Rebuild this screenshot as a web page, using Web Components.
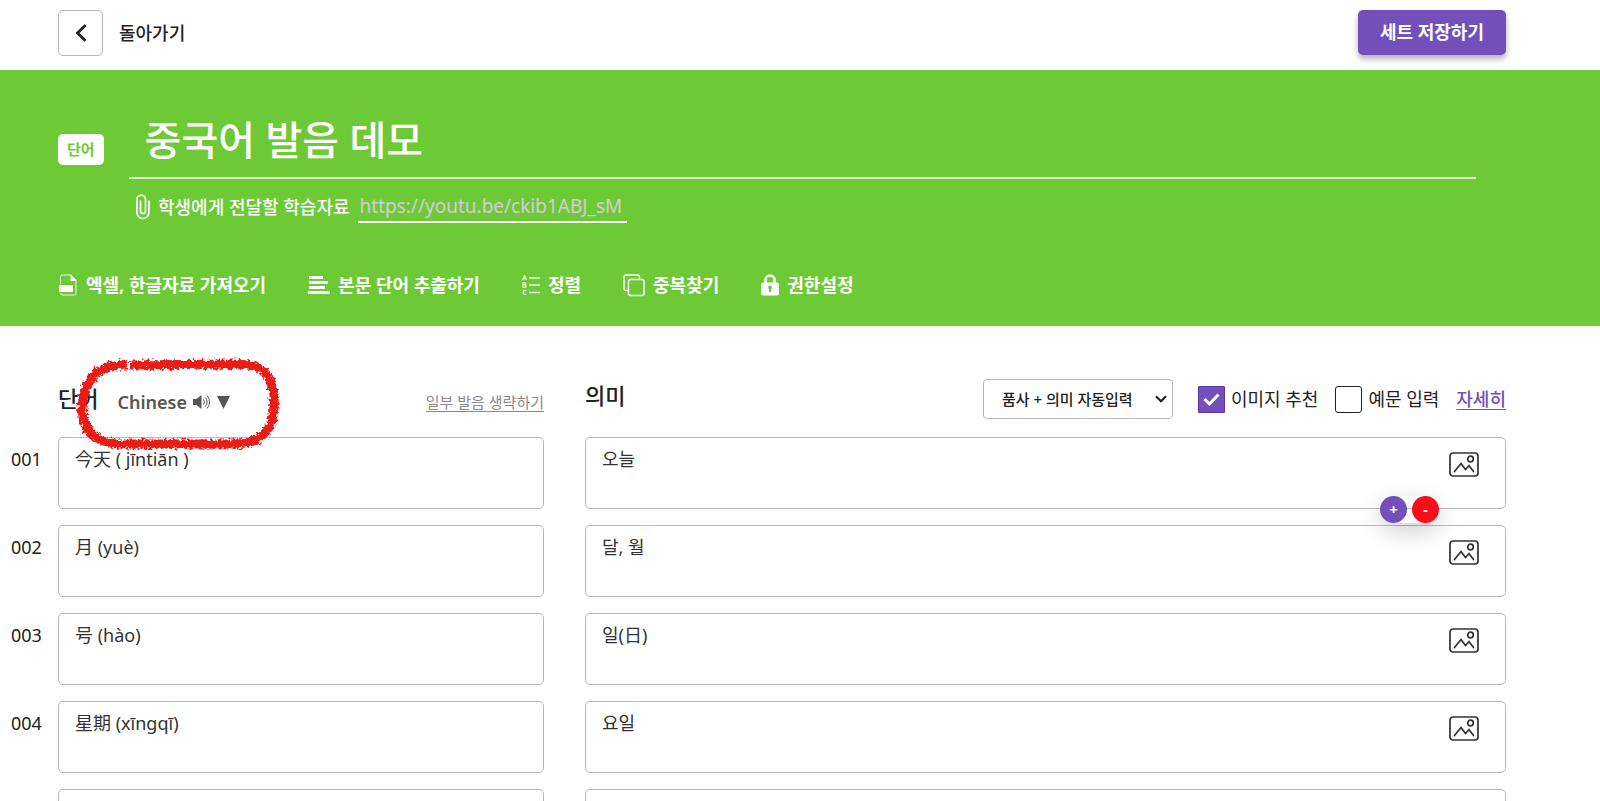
<!DOCTYPE html>
<html lang="ko">
<head>
<meta charset="utf-8">
<meta name="viewport" content="width=device-width, initial-scale=1">
<title>중국어 발음 데모</title>
<style>
    body {
        margin: 0;
        overflow: hidden;
        background: #fff;
        color: #222;
        font: 18px/26px "Noto Sans", "Noto Sans CJK KR", sans-serif;
        --purple: #734fbb;
        --green: #6dca36;
        --line: #b9b9b9;
        --left: 58px;
        --right: 94px;
    }
</style>
</head>
<body>
<set-header></set-header>
<set-hero>
    <tool-button icon="file">엑셀, 한글자료 가져오기</tool-button>
    <tool-button icon="lines">본문 단어 추출하기</tool-button>
    <tool-button icon="sort">정렬</tool-button>
    <tool-button icon="copy">중복찾기</tool-button>
    <tool-button icon="lock">권한설정</tool-button>
</set-hero>
<card-list>
    <list-head></list-head>
    <word-card no="001" word="今天 ( jīntiān )" meaning="오늘" active></word-card>
    <word-card no="002" word="月 (yuè)" meaning="달, 월"></word-card>
    <word-card no="003" word="号 (hào)" meaning="일(日)"></word-card>
    <word-card no="004" word="星期 (xīngqī)" meaning="요일"></word-card>
    <word-card></word-card>
</card-list>

<script>
const ICONS = {
    file: `<svg width="20" height="24" viewBox="0 0 20 24" fill="none" stroke="#fff">
        <path d="M2.5 11V4a2 2 0 0 1 2-2H13l5 5v13.500a1.500 1.500 0 0 1-1.500 1.500H4.500a2 2 0 0 1-2-2" stroke-opacity=".85"/>
        <path d="M12.500 2l6 6h-6z" fill="#fff" stroke="none"/>
        <rect x="1" y="12" width="14" height="7" rx="1" fill="#fff" stroke="none"/></svg>`,
    lines: `<svg width="22" height="18" viewBox="0 0 22 18" fill="#fff">
        <path d="M1 0h14v3H1zM1 5h19v3H1zM1 10h16v3H1zM0 15h22v3H0z"/></svg>`,
    sort: `<svg width="18" height="20" viewBox="0 0 18 20" fill="none" stroke="#fff" stroke-opacity=".85">
        <path d="M7 3h11M7 10h11M7 17.500h11" stroke-width="1.300"/>
        <path d="M.7 5L2.500 .7 4.300 5M1.300 3.500h2.500M1 7.700v4.600h1.800a1.200 1.200 0 0 0 0-2.400H1h1.600a1.100 1.100 0 0 0 0-2.200zM4.300 15.700a2 2 0 1 0 0 3.200" stroke-width="1.300"/></svg>`,
    copy: `<svg width="22" height="23" viewBox="0 0 22 23" fill="none" stroke="#fff" stroke-width="1.400">
        <path d="M5.500 16.500H3a2 2 0 0 1-2-2V3a2 2 0 0 1 2-2h11.500a2 2 0 0 1 2 2v2.500"/>
        <rect x="5.500" y="5.500" width="15.500" height="16" rx="2"/></svg>`,
    lock: `<svg width="18" height="22" viewBox="0 0 18 22">
        <path d="M4.500 10V6a4.500 4.500 0 0 1 9 0v4" fill="none" stroke="#fff" stroke-width="2.600"/>
        <rect x="0" y="8.500" width="18" height="13" rx="2" fill="#fff"/>
        <path d="M9 11.500a2 2 0 0 1 1 3.700V18H8v-2.800a2 2 0 0 1 1-3.700z" fill="#6dca36"/></svg>`,
    clip: `<svg width="14" height="26" viewBox="0 0 14 26" fill="none" stroke="#fff" stroke-width="1.700" stroke-linecap="round">
        <path d="M4.500 7v10a2.500 2.500 0 0 0 5 0V5.500a4.300 4.300 0 0 0-8.600 0V18.500a6 6 0 0 0 12 0V7"/></svg>`,
    back: `<svg width="12" height="18" viewBox="0 0 12 18" fill="none" stroke="#222" stroke-width="2.800">
        <path d="M10.500 1.200L2.500 9l8 7.800"/></svg>`,
    speaker: `<svg width="18" height="16" viewBox="0 0 18 16" fill="none" stroke="#555">
        <path d="M0 5h3.500L8.500 1v14L3.500 11H0z" fill="#555" stroke="none"/>
        <path d="M10.500 5.500a4 4 0 0 1 0 5M12.300 3.500a6.500 6.500 0 0 1 0 9M14 1.500a9.500 9.500 0 0 1 0 13"/></svg>`,
    down: `<svg width="13" height="13" viewBox="0 0 13 13"><path d="M0 0h13L6.500 13z" fill="#555"/></svg>`,
    chevron: `<svg width="12" height="8" viewBox="0 0 12 8" fill="none" stroke="#222" stroke-width="2.200">
        <path d="M1 1.200l5 5 5-5"/></svg>`,
    image: `<svg width="30" height="25" viewBox="0 0 30 25" fill="none" stroke="#333" stroke-width="1.700" stroke-linejoin="round" stroke-linecap="round">
        <rect x="1" y="1" width="28" height="23" rx="3"/>
        <circle cx="21.500" cy="7" r="2.800"/>
        <path d="M5.500 19.500l6.500-8 4.500 6 3.500-4 4.500 6"/></svg>`,
};

class SetHeader extends HTMLElement {
    constructor() {
        super();
        this.attachShadow({ mode: 'open' }).innerHTML = `
            <style>
                :host {
                    display: flex;
                    justify-content: space-between;
                    align-items: flex-start;
                    box-sizing: border-box;
                    min-height: 70px;
                    padding: 10px var(--right) 0 var(--left);
                }
                button { font: inherit; cursor: pointer; box-sizing: border-box; }
                .back {
                    display: flex;
                    align-items: center;
                    gap: 16px;
                    padding: 0;
                    border: 0;
                    background: none;
                    color: #222;
                    font-weight: 500;
                }
                .box {
                    display: grid;
                    place-items: center;
                    box-sizing: border-box;
                    width: 45px;
                    height: 46px;
                    border: 1px solid var(--line);
                    border-radius: 5px;
                }
                .save {
                    height: 45px;
                    padding: 0 22px 2px;
                    border: 0;
                    border-radius: 5px;
                    background: var(--purple);
                    box-shadow: 0 4px 6px rgba(0, 0, 0, .3);
                    color: #fff;
                    font-weight: 700;
                }
            </style>
            <button class="back"><span class="box">${ICONS.back}</span>돌아가기</button>
            <button class="save">세트 저장하기</button>
        `;
    }
}

class ToolButton extends HTMLElement {
    constructor() {
        super();
        this.attachShadow({ mode: 'open' }).innerHTML = `
            <style>
                :host { display: block; }
                button {
                    display: flex;
                    align-items: center;
                    gap: 8px;
                    padding: 0;
                    border: 0;
                    background: none;
                    color: #fff;
                    font: inherit;
                    font-weight: 700;
                    cursor: pointer;
                }
            </style>
            <button>${ICONS[this.getAttribute('icon')]}<slot></slot></button>
        `;
    }
}

class SetHero extends HTMLElement {
    constructor() {
        super();
        this.attachShadow({ mode: 'open' }).innerHTML = `
            <style>
                :host {
                    display: block;
                    padding: 40px var(--right) 28px var(--left);
                    background: var(--green);
                    color: #fff;
                }
                .title {
                    display: flex;
                    align-items: flex-end;
                    gap: 25px;
                    padding-right: 30px;
                }
                .badge {
                    margin-bottom: 14px;
                    padding: 2px 9px 3px;
                    border-radius: 5px;
                    background: #fff;
                    color: var(--green);
                    font-size: 15px;
                    font-weight: 700;
                }
                input {
                    box-sizing: border-box;
                    border: 0;
                    border-radius: 0;
                    outline: 0;
                    background: none;
                    color: #fff;
                    font: inherit;
                }
                .title input {
                    flex: 1;
                    min-width: 0;
                    height: 69px;
                    padding: 0 16px 12px;
                    border-bottom: 2px solid #e0f4d4;
                    font-size: 40px;
                    font-weight: 500;
                }
                .link {
                    display: flex;
                    align-items: center;
                    gap: 8px;
                    padding: 12px 0 0 78px;
                    font-weight: 500;
                }
                .link input {
                    width: 269px;
                    height: 32px;
                    padding: 0 2px;
                    border-bottom: 2px solid #fff;
                    font-size: 19px;
                    font-weight: 400;
                }
                .link input::placeholder { color: #d9cadb; opacity: 1; }
                nav {
                    display: flex;
                    flex-wrap: wrap;
                    gap: 42px;
                    padding-top: 49px;
                }
            </style>
            <div class="title">
                <span class="badge">단어</span>
                <input aria-label="세트 이름" value="중국어 발음 데모">
            </div>
            <div class="link">
                ${ICONS.clip}
                <label for="url">학생에게 전달할 학습자료</label>
                <input id="url" type="url" placeholder="https://youtu.be/ckib1ABJ_sM">
            </div>
            <nav><slot></slot></nav>
        `;
    }
}

class CardList extends HTMLElement {
    constructor() {
        super();
        this.attachShadow({ mode: 'open' }).innerHTML = `
            <style>
                :host {
                    display: flex;
                    flex-direction: column;
                    gap: 16px;
                    padding: 44px var(--right) 16px 0;
                }
            </style>
            <slot></slot>
        `;
    }
}

class CheckOption extends HTMLElement {
    constructor() {
        super();
        this.attachShadow({ mode: 'open' }).innerHTML = `
            <style>
                :host { display: block; }
                label { display: flex; align-items: center; gap: 6px; }
                input {
                    appearance: none;
                    box-sizing: border-box;
                    width: 27px;
                    height: 27px;
                    margin: 0;
                    border: 1px solid #222;
                    border-radius: 3px;
                }
                .mark { display: grid; }
                .mark > * { grid-area: 1 / 1; place-self: center; }
                svg { display: none; pointer-events: none; }
                input:checked { border-color: #5c35ad; border-radius: 1px; background: var(--purple); }
                input:checked + svg { display: block; }
            </style>
            <label>
                <span class="mark">
                    <input type="checkbox" ${this.hasAttribute('checked') ? 'checked' : ''}>
                    <svg width="17" height="13" viewBox="0 0 17 13" fill="none" stroke="#fff" stroke-width="3"><path d="M1.500 6l5 5 9-9.500"/></svg>
                </span>
                <slot></slot>
            </label>
        `;
    }
}

// Rough red pencil ring drawn around the language picker
class PencilRing extends HTMLElement {
    constructor() {
        super();
        this.attachShadow({ mode: 'open' }).innerHTML = `
            <style>
                :host {
                    position: absolute;
                    top: -32px;
                    left: -41px;
                    z-index: 1;
                    width: 206px;
                    height: 96px;
                    pointer-events: none;
                }
            </style>
            <svg width="206" height="96" viewBox="0 0 206 96">
                <filter id="rough" x="-5%" y="-10%" width="110%" height="120%">
                    <feTurbulence type="fractalNoise" baseFrequency=".35" numOctaves="2" seed="4"/>
                    <feDisplacementMap in="SourceGraphic" scale="8" xChannelSelector="R" yChannelSelector="G"/>
                </filter>
                <path filter="url(#rough)" fill="none" stroke="#ea1c14" stroke-width="9"
                    d="M51 8C32 8 21 12 14 23C8 33 6 42 6 52C7 72 18 85 42 87L160 87C182 86 195 76 197 58C200 40 198 28 191 18C184 8 172 7 154 7L54 8"/>
            </svg>
        `;
    }
}

class ListHead extends HTMLElement {
    constructor() {
        super();
        this.attachShadow({ mode: 'open' }).innerHTML = `
            <style>
                :host {
                    display: grid;
                    grid-template-columns: 486fr 921fr;
                    column-gap: 41px;
                    height: 51px;
                    padding-left: var(--left);
                }
                div { display: flex; align-items: center; }
                .term { height: 40px; margin-top: 12px; }
                h2 { margin: 0; font-size: 22px; line-height: 32px; font-weight: 500; }
                .term h2 { align-self: flex-start; }
                .lang { position: relative; margin: 0 auto 0 19px; }
                .lang button {
                    display: flex;
                    align-items: center;
                    gap: 6px;
                    padding: 0;
                    border: 0;
                    background: none;
                    color: #555;
                    font: inherit;
                    font-weight: 600;
                }
                .skip { color: #8a8a8a; font-size: 15px; text-underline-offset: 3px; }
                .meaning { align-items: flex-start; }
                .meaning h2 { margin: 9px auto 0 0; }
                .tools { gap: 17px; height: 40px; margin-top: 9px; }
                .select { display: grid; margin-right: 8px; align-items: center; }
                .select > * { grid-area: 1 / 1; }
                .select svg { justify-self: end; margin-right: 6px; pointer-events: none; }
                select {
                    appearance: none;
                    box-sizing: border-box;
                    width: 190px;
                    height: 40px;
                    padding: 0 18px;
                    border: 1px solid var(--line);
                    border-radius: 4px;
                    background: #fff;
                    color: #222;
                    font: inherit;
                    font-size: 15px;
                    font-weight: 500;
                }
                .more { color: var(--purple); font-weight: 500; text-underline-offset: 3px; }
            </style>
            <div class="term">
                <h2>단어</h2>
                <div class="lang">
                    <button>Chinese ${ICONS.speaker}${ICONS.down}</button>
                    <pencil-ring></pencil-ring>
                </div>
                <a class="skip" href="#">일부 발음 생략하기</a>
            </div>
            <div class="meaning">
                <h2>의미</h2>
                <div class="tools">
                    <div class="select">
                        <select aria-label="자동입력"><option>품사 + 의미 자동입력</option></select>
                        ${ICONS.chevron}
                    </div>
                    <check-option checked>이미지 추천</check-option>
                    <check-option>예문 입력</check-option>
                    <a class="more" href="#">자세히</a>
                </div>
            </div>
        `;
    }
}

class WordCard extends HTMLElement {
    constructor() {
        super();
        const no = this.getAttribute('no') || '';
        const word = this.getAttribute('word') || '';
        const meaning = this.getAttribute('meaning') || '';
        this.attachShadow({ mode: 'open' }).innerHTML = `
            <style>
                :host {
                    display: grid;
                    grid-template-columns: var(--left) 486fr 41px 921fr;
                    position: relative;
                }
                label { padding: 9px 0 0 11px; }
                .box {
                    display: flex;
                    box-sizing: border-box;
                    height: 72px;
                    border: 1px solid var(--line);
                    border-radius: 5px;
                }
                .meaning { grid-column: 4; padding-right: 26px; }
                textarea {
                    flex: 1;
                    min-width: 0;
                    box-sizing: border-box;
                    padding: 8px 16px 0;
                    border: 0;
                    outline: 0;
                    resize: none;
                    background: none;
                    color: #333;
                    font: inherit;
                }
                .pic {
                    align-self: flex-start;
                    margin-top: 14px;
                    padding: 0;
                    border: 0;
                    background: none;
                    line-height: 0;
                }
                .edit {
                    display: none;
                    position: absolute;
                    right: 67px;
                    bottom: -14px;
                    z-index: 1;
                    gap: 5px;
                    border-radius: 14px;
                    box-shadow: 0 8px 24px rgba(0, 0, 0, .2);
                }
                :host([active]) .edit { display: flex; }
                .edit button {
                    width: 27px;
                    height: 27px;
                    padding: 0 0 2px;
                    border: 0;
                    border-radius: 50%;
                    background: var(--purple);
                    color: #fff;
                    font: inherit;
                    font-size: 15px;
                    line-height: 24px;
                    font-weight: 700;
                }
                .edit .del { background: #fd0d1b; }
            </style>
            <label for="word">${no}</label>
            <div class="box word"><textarea id="word">${word}</textarea></div>
            <div class="box meaning">
                <textarea aria-label="의미">${meaning}</textarea>
                <button class="pic" aria-label="이미지">${ICONS.image}</button>
            </div>
            <div class="edit"><button>+</button><button class="del">-</button></div>
        `;
    }
}

customElements.define('set-header', SetHeader);
customElements.define('tool-button', ToolButton);
customElements.define('set-hero', SetHero);
customElements.define('card-list', CardList);
customElements.define('check-option', CheckOption);
customElements.define('pencil-ring', PencilRing);
customElements.define('list-head', ListHead);
customElements.define('word-card', WordCard);
</script>
</body>
</html>
